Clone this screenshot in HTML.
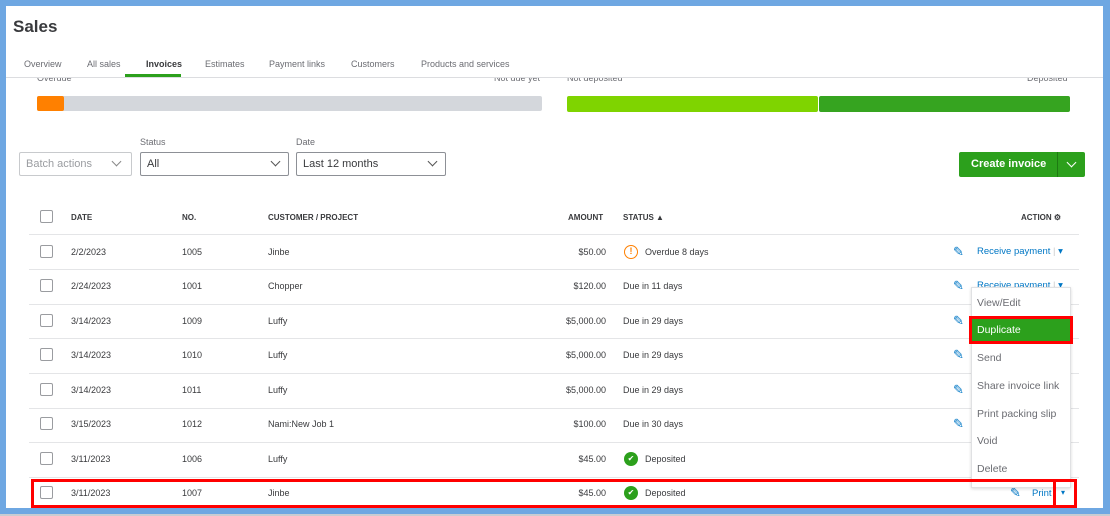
<!DOCTYPE html><html><head><meta charset="utf-8"><style>
*{margin:0;padding:0;box-sizing:border-box}
body{width:1110px;height:516px;background:#c8ccd2;font-family:"Liberation Sans",sans-serif;position:relative;overflow:hidden;color:#393a3d}
.win{position:absolute;left:0;top:0;width:1110px;height:514px;border:6px solid #6ea7e2;border-right-width:7px;background:#fff}
.a{position:absolute;white-space:nowrap}
.t{font-size:9px;color:#393a3d}
.h{font-size:8px;font-weight:bold;color:#393a3d}
.cb{position:absolute;left:40px;width:13px;height:13px;border:1px solid #9a9ca0;border-radius:2px;background:#fff}
.line{position:absolute;left:29px;width:1050px;height:1px;background:#e4e5e7}
.sel{position:absolute;height:24px;border:1px solid #8d9096;border-radius:2px;background:#fff;font-size:11px;color:#393a3d;padding:5px 6px}
.chev{position:absolute;width:7px;height:7px;border-right:1.5px solid #555;border-bottom:1.5px solid #555;transform:rotate(45deg)}
.pen{position:absolute;left:953px;font-size:13px;color:#0077c5}
.rp{position:absolute;left:977px;font-size:9.5px;color:#0077c5}
.red{position:absolute;border:3px solid #f00}
.mi{position:absolute;left:977px;font-size:10.5px;color:#6b6c72}
.lbl{position:absolute;top:73px;font-size:9px;color:#6b6c72}
</style></head><body>
<div class="win"></div>
<div class="lbl" style="left:37px">Overdue</div>
<div class="lbl" style="left:494px">Not due yet</div>
<div class="lbl" style="left:567px">Not deposited</div>
<div class="lbl" style="left:1027px">Deposited</div>
<div class="a" style="left:6px;top:6px;width:1097px;height:72px;background:#fff"></div>
<div class="a" style="left:13px;top:17px;font-size:17px;font-weight:bold;color:#393a3d">Sales</div>
<div class="a" style="left:24px;top:59px;font-size:9px;color:#6b6c72">Overview</div>
<div class="a" style="left:87px;top:59px;font-size:9px;color:#6b6c72">All sales</div>
<div class="a" style="left:146px;top:59px;font-size:9px;font-weight:bold;color:#393a3d">Invoices</div>
<div class="a" style="left:125px;top:74px;width:56px;height:3px;background:#2ca01c"></div>
<div class="a" style="left:205px;top:59px;font-size:9px;color:#6b6c72">Estimates</div>
<div class="a" style="left:269px;top:59px;font-size:9px;color:#6b6c72">Payment links</div>
<div class="a" style="left:351px;top:59px;font-size:9px;color:#6b6c72">Customers</div>
<div class="a" style="left:421px;top:59px;font-size:9px;color:#6b6c72">Products and services</div>
<div class="a" style="left:6px;top:77px;width:1097px;height:1px;background:#dcdde0"></div>
<div class="a" style="left:37px;top:96px;width:505px;height:15px;background:#d4d7dc;border-radius:2px"></div>
<div class="a" style="left:37px;top:96px;width:27px;height:15px;background:#ff8000;border-radius:2px"></div>
<div class="a" style="left:567px;top:96px;width:251px;height:16px;background:#7fd400;border-radius:2px"></div>
<div class="a" style="left:819px;top:96px;width:251px;height:16px;background:#36a420;border-radius:2px"></div>
<div class="a" style="left:140px;top:137px;font-size:9px;color:#6b6c72">Status</div>
<div class="a" style="left:296px;top:137px;font-size:9px;color:#6b6c72">Date</div>
<div class="sel" style="left:19px;top:152px;width:113px;border-color:#c8cacd;color:#9a9ca0">Batch actions</div>
<div class="chev" style="left:113px;top:158px;border-color:#888"></div>
<div class="sel" style="left:140px;top:152px;width:149px">All</div>
<div class="chev" style="left:272px;top:158px"></div>
<div class="sel" style="left:296px;top:152px;width:150px">Last 12 months</div>
<div class="chev" style="left:429px;top:158px"></div>
<div class="a" style="left:959px;top:152px;width:126px;height:25px;background:#2ca01c;border-radius:2px"></div>
<div class="a" style="left:971px;top:158px;font-size:11px;font-weight:bold;color:#fff">Create invoice</div>
<div class="a" style="left:1057px;top:152px;width:1px;height:25px;background:#1e7a12"></div>
<div class="chev" style="left:1068px;top:159px;border-color:#fff"></div>
<div class="cb" style="top:210px"></div>
<div class="a h" style="left:71px;top:213px">DATE</div>
<div class="a h" style="left:182px;top:213px">NO.</div>
<div class="a h" style="left:268px;top:213px">CUSTOMER / PROJECT</div>
<div class="a h" style="left:568px;top:213px">AMOUNT</div>
<div class="a h" style="left:623px;top:213px">STATUS ▲</div>
<div class="a h" style="left:1021px;top:213px">ACTION ⚙</div>
<div class="line" style="top:234px"></div>
<div class="line" style="top:269px"></div>
<div class="line" style="top:304px"></div>
<div class="line" style="top:338px"></div>
<div class="line" style="top:373px"></div>
<div class="line" style="top:408px"></div>
<div class="line" style="top:442px"></div>
<div class="line" style="top:477px"></div>
<div class="cb" style="top:245px"></div><div class="a t" style="left:71px;top:247px">2/2/2023</div><div class="a t" style="left:182px;top:247px">1005</div><div class="a t" style="left:268px;top:247px">Jinbe</div><div class="a t" style="right:504px;top:247px">$50.00</div>
<div class="a" style="left:624px;top:245px;width:14px;height:14px;border:1.5px solid #ff8000;border-radius:50%;font-size:9px;color:#ff8000;text-align:center;line-height:11px;font-weight:bold">!</div><div class="a t" style="left:645px;top:247px">Overdue 8 days</div>
<div class="pen" style="top:244px">✎</div><div class="rp" style="top:246px">Receive payment <span style="color:#ccc">|</span> ▾</div>
<div class="cb" style="top:279px"></div><div class="a t" style="left:71px;top:281px">2/24/2023</div><div class="a t" style="left:182px;top:281px">1001</div><div class="a t" style="left:268px;top:281px">Chopper</div><div class="a t" style="right:504px;top:281px">$120.00</div><div class="a t" style="left:623px;top:281px">Due in 11 days</div>
<div class="pen" style="top:278px">✎</div><div class="rp" style="top:280px">Receive payment <span style="color:#ccc">|</span> ▾</div>
<div class="cb" style="top:314px"></div><div class="a t" style="left:71px;top:316px">3/14/2023</div><div class="a t" style="left:182px;top:316px">1009</div><div class="a t" style="left:268px;top:316px">Luffy</div><div class="a t" style="right:504px;top:316px">$5,000.00</div><div class="a t" style="left:623px;top:316px">Due in 29 days</div><div class="pen" style="top:313px">✎</div>
<div class="cb" style="top:348px"></div><div class="a t" style="left:71px;top:350px">3/14/2023</div><div class="a t" style="left:182px;top:350px">1010</div><div class="a t" style="left:268px;top:350px">Luffy</div><div class="a t" style="right:504px;top:350px">$5,000.00</div><div class="a t" style="left:623px;top:350px">Due in 29 days</div><div class="pen" style="top:347px">✎</div>
<div class="cb" style="top:383px"></div><div class="a t" style="left:71px;top:385px">3/14/2023</div><div class="a t" style="left:182px;top:385px">1011</div><div class="a t" style="left:268px;top:385px">Luffy</div><div class="a t" style="right:504px;top:385px">$5,000.00</div><div class="a t" style="left:623px;top:385px">Due in 29 days</div><div class="pen" style="top:382px">✎</div>
<div class="cb" style="top:417px"></div><div class="a t" style="left:71px;top:419px">3/15/2023</div><div class="a t" style="left:182px;top:419px">1012</div><div class="a t" style="left:268px;top:419px">Nami:New Job 1</div><div class="a t" style="right:504px;top:419px">$100.00</div><div class="a t" style="left:623px;top:419px">Due in 30 days</div><div class="pen" style="top:416px">✎</div>
<div class="cb" style="top:452px"></div><div class="a t" style="left:71px;top:454px">3/11/2023</div><div class="a t" style="left:182px;top:454px">1006</div><div class="a t" style="left:268px;top:454px">Luffy</div><div class="a t" style="right:504px;top:454px">$45.00</div>
<div class="a" style="left:624px;top:452px;width:14px;height:14px;background:#2ca01c;border-radius:50%;color:#fff;font-size:8px;text-align:center;line-height:14px">✔</div><div class="a t" style="left:645px;top:454px">Deposited</div>
<div class="cb" style="top:486px"></div><div class="a t" style="left:71px;top:488px">3/11/2023</div><div class="a t" style="left:182px;top:488px">1007</div><div class="a t" style="left:268px;top:488px">Jinbe</div><div class="a t" style="right:504px;top:488px">$45.00</div>
<div class="a" style="left:624px;top:486px;width:14px;height:14px;background:#2ca01c;border-radius:50%;color:#fff;font-size:8px;text-align:center;line-height:14px">✔</div><div class="a t" style="left:645px;top:488px">Deposited</div>
<div class="pen" style="left:1010px;top:485px">✎</div><div class="a" style="left:1032px;top:488px;font-size:9.5px;color:#0077c5">Print</div>
<div class="a" style="left:971px;top:287px;width:100px;height:201px;background:#fff;border:1px solid #e0e1e3;box-shadow:0 1px 3px rgba(0,0,0,.15)"></div>
<div class="mi" style="top:297px">View/Edit</div>
<div class="a" style="left:971px;top:318px;width:100px;height:24px;background:#2ca01c"></div>
<div class="mi" style="top:324px;color:#fff">Duplicate</div>
<div class="mi" style="top:352px">Send</div>
<div class="mi" style="top:380px">Share invoice link</div>
<div class="mi" style="top:408px">Print packing slip</div>
<div class="mi" style="top:435px">Void</div>
<div class="mi" style="top:463px">Delete</div>
<div class="red" style="left:969px;top:316px;width:104px;height:28px"></div>
<div class="red" style="left:31px;top:479px;width:1046px;height:29px"></div>
<div class="red" style="left:1053px;top:479px;width:24px;height:29px"></div>
<div class="a" style="left:1061px;top:488px;font-size:8px;color:#0077c5">▾</div>
</body></html>
